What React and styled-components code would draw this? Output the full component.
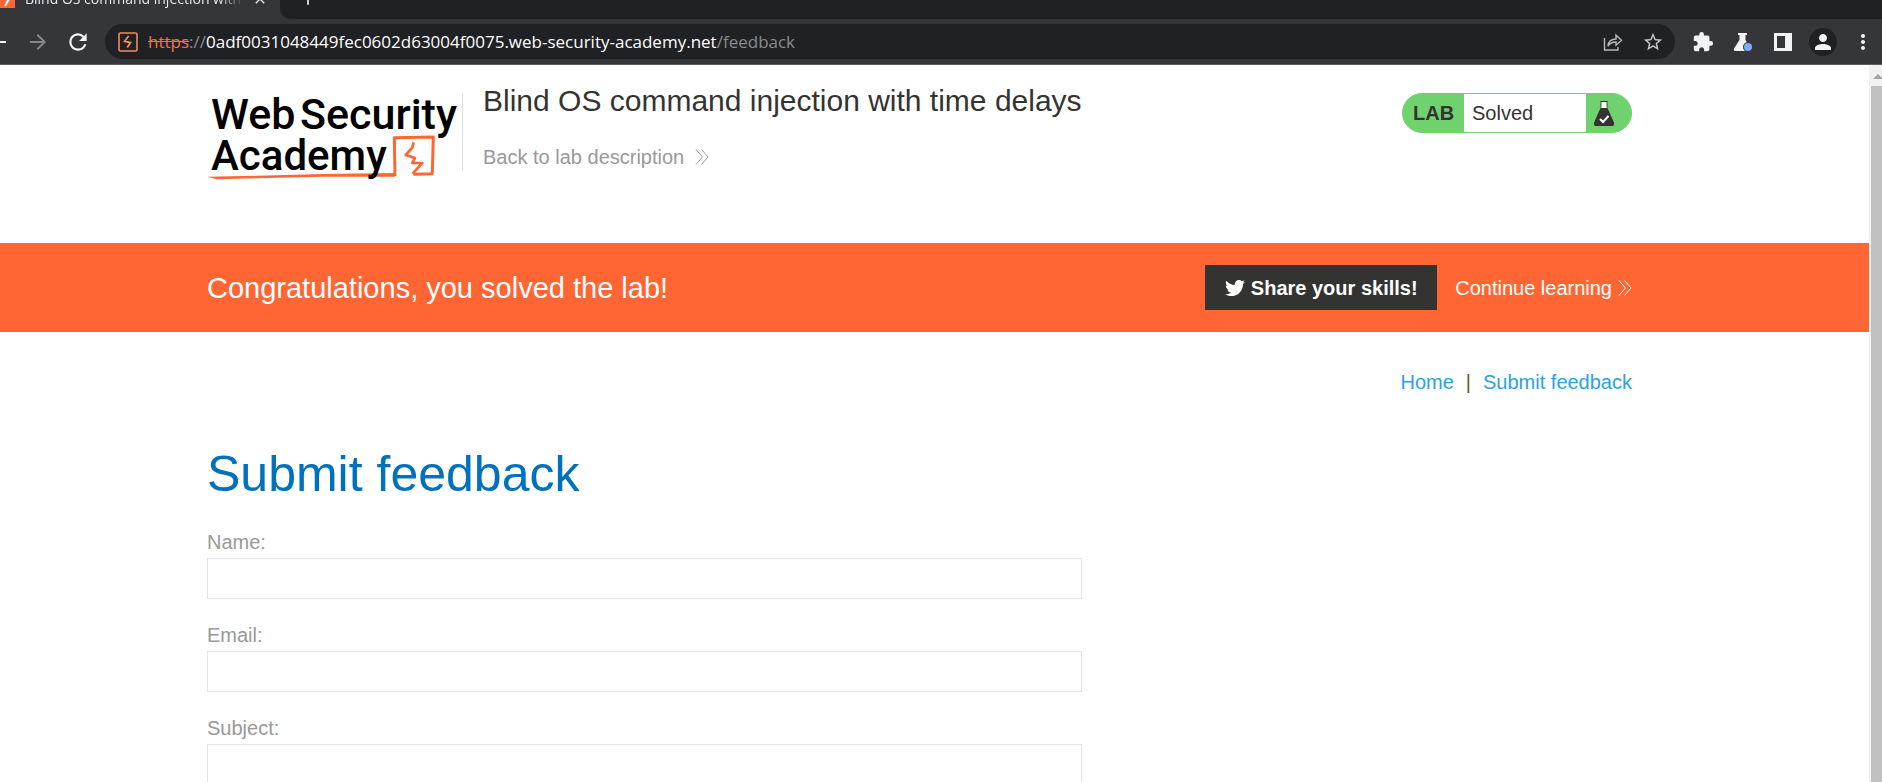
import React from 'react';
import styled, { createGlobalStyle } from 'styled-components';
import {
  MdArrowBack,
  MdArrowForward,
  MdRefresh,
  MdStarBorder,
  MdExtension,
  MdPerson,
  MdMoreVert,
  MdClose,
  MdAdd,
} from 'react-icons/md';
import { FaTwitter } from 'react-icons/fa';

const GlobalStyle = createGlobalStyle`
  * { box-sizing: border-box; }
  body {
    margin: 0;
    background: #fff;
    font-family: "Liberation Sans", Arial, sans-serif;
    font-size: 20px;
    color: #333332;
  }
  svg { display: block; flex: none; }
`;

const Window = styled.div`
  display: flex;
  flex-direction: column;
  height: 100vh;
  overflow: hidden;
`;

/* ---------- browser chrome ---------- */

const TabStrip = styled.div`
  flex: none;
  display: flex;
  align-items: flex-end;
  height: 19px;
  overflow: hidden;
  background: #35363a;
  font-family: "Open Sans", sans-serif;
`;

const Tab = styled.div`
  flex: none;
  display: flex;
  align-items: center;
  width: 280px;
  height: 40px;
  padding-right: 8px;
  color: #e8eaed;
`;

const TabTitle = styled.span`
  flex: 1;
  margin: 0 4px 0 10px;
  overflow: hidden;
  white-space: nowrap;
  font-size: 14px;
  line-height: 20px;
  mask-image: linear-gradient(to right, #000 88%, transparent);
`;

const StripRest = styled.div`
  flex: 1;
  display: flex;
  align-items: center;
  justify-content: space-between;
  height: 40px;
  padding: 0 10px 0 16px;
  border-bottom-left-radius: 10px;
  background: #202124;
`;

const WindowButtons = styled.div`
  display: flex;
  align-items: center;
  gap: 34px;
`;

const ChromeButton = styled.button`
  flex: none;
  display: flex;
  align-items: center;
  justify-content: center;
  width: 24px;
  height: 24px;
  padding: 0;
  border: 0;
  background: none;
  color: ${(p) => p.$tone || '#f1f3f4'};
`;

const ProfileButton = styled(ChromeButton)`
  width: 28px;
  height: 28px;
  margin: 0 -2px;
  border-radius: 50%;
  background: #202124;
`;

const Toolbar = styled.div`
  flex: none;
  display: flex;
  align-items: center;
  height: 46px;
  padding-right: 7px;
  border-bottom: 1px solid #5b5c60;
  background: #35363a;
`;

const NavButtons = styled.div`
  display: flex;
  align-items: center;
  gap: 16px;
  width: 105px;
  margin-left: -14px;
  margin-right: 14px;
`;

const AddressBar = styled.div`
  flex: 1;
  display: flex;
  align-items: center;
  height: 35px;
  padding: 0 10px 0 13px;
  border-radius: 18px;
  background: #202124;
`;

const Url = styled.div`
  flex: 1;
  margin-left: 10px;
  font-family: "Open Sans", sans-serif;
  font-size: 17px;
  line-height: 24px;
  white-space: nowrap;
  color: #fff;
`;

const Scheme = styled.span`
  color: #f0704a;
  text-decoration: line-through;
`;

const Faded = styled.span`
  color: #8a8c8f;
`;

const AddressActions = styled.div`
  display: flex;
  gap: 16px;
`;

const Extensions = styled.div`
  display: flex;
  align-items: center;
  gap: 16px;
  margin-left: 16px;
`;

/* ---------- page ---------- */

const Viewport = styled.div`
  flex: 1;
  display: flex;
  min-height: 0;
`;

const Page = styled.div`
  flex: 1;
  min-width: 0;
  overflow: hidden;
`;

const Container = styled.div`
  padding: 0 237px 0 207px;
`;

const Header = styled(Container).attrs({ as: 'header' })`
  display: flex;
  align-items: flex-start;
  height: 178px;
  padding-top: 28px;
`;

const Brand = styled.a`
  flex: none;
  width: 256px;
  height: 78px;
  border-right: 1px solid #e0e0e0;
`;

const Intro = styled.div`
  flex: 1;
  margin: -14px 0 0 20px;
`;

const LabTitle = styled.h2`
  margin: 0 0 22px;
  font-size: 30px;
  line-height: 44px;
  font-weight: 400;
`;

const PlainLink = styled.a`
  display: inline-flex;
  align-items: center;
  gap: ${(p) => p.$gap || 0}px;
  line-height: 24px;
  color: ${(p) => p.$color};
  text-decoration: none;
`;

const Badge = styled.div`
  display: flex;
  width: 230px;
  height: 40px;
  border: 1px solid #70d26e;
  border-radius: 20px;
  background: #70d26e;
  line-height: 38px;
`;

const BadgeLabel = styled.strong`
  width: 61px;
  padding-left: 10px;
`;

const BadgeStatus = styled.span`
  width: 122px;
  padding-left: 8px;
  background: #fff;
`;

const BadgeIcon = styled.span`
  padding: 7px 0 0 8px;
`;

const Banner = styled.section`
  background: #ff6633;
  color: #fff;
`;

const BannerRow = styled(Container)`
  display: flex;
  align-items: center;
  height: 89px;
`;

const BannerText = styled.h3`
  flex: 1;
  margin: 0;
  font-size: 29px;
  line-height: 40px;
  font-weight: 400;
`;

const ShareButton = styled.button`
  display: flex;
  align-items: center;
  justify-content: center;
  gap: 6px;
  width: 232px;
  height: 45px;
  margin-right: 18px;
  padding: 0;
  border: 0;
  background: #333332;
  color: #fff;
  font: bold 20px/24px "Liberation Sans", Arial, sans-serif;
`;

const TopLinks = styled.nav`
  display: flex;
  justify-content: flex-end;
  gap: 12px;
  padding: 38px 0 45px;
  line-height: 24px;
  color: #7a5230;
`;

const PageTitle = styled.h1`
  margin: 0 0 20px;
  font-size: 50px;
  line-height: 70px;
  font-weight: 400;
  color: #0071bc;
`;

const Form = styled.form`
  display: flex;
  flex-direction: column;
  gap: 23px;
  max-width: 875px;
`;

const Field = styled.label`
  display: flex;
  flex-direction: column;
  gap: 3px;
  line-height: 26px;
  color: #999;
`;

const TextInput = styled.input`
  width: 100%;
  height: 41px;
  padding: 0 12px;
  border: 1px solid #e4e4e4;
  background: #fff;
  font: 20px "Liberation Sans", Arial, sans-serif;
  color: #333332;
`;

const ScrollTrack = styled.div`
  flex: none;
  width: 13px;
  padding-left: 2px;
  background: #f1f1f1;
`;

const ScrollThumb = styled.div`
  height: 100%;
  background: #c1c1c1;
`;

/* ---------- drawings ---------- */

const Favicon = () => (
  <svg width="15" height="18" viewBox="0 0 15 18">
    <rect width="15" height="18" fill="#ff6633" />
    <path d="M8 2 4 9h5L5 16" fill="none" stroke="#fff" strokeWidth="2" />
  </svg>
);

const SiteIcon = () => (
  <svg width="20" height="20" viewBox="0 0 20 20" fill="none" stroke="#f58a5b">
    <rect x="1" y="1" width="18" height="18" rx="1.5" strokeWidth="1.6" />
    <path d="M10.6 4 6.6 9.3l6 1.3-3.4 5" strokeWidth="1.8" />
  </svg>
);

const ShareIcon = () => (
  <svg width="20" height="20" viewBox="0 0 20 20" fill="none" stroke="#b6b8bb" strokeWidth="1.4">
    <path d="M1.5 6v12h13.500v-3" />
    <path d="M5 14c.5-5 3.500-7 8-7V3.200l5.500 5-5.500 5V10c-3.500 0-6 1-8 4z" />
  </svg>
);

const LabsIcon = () => (
  <svg width="20" height="20" viewBox="0 0 20 20">
    <path d="M5 1h9v2h-1.500v5l5 8.500c.6 1.200 0 2.500-1.500 2.500H2.500C1 19 .4 17.700 1 16.500L6.500 8V3H5z" fill="#f1f3f4" />
    <circle cx="15" cy="15" r="5" fill="#35363a" />
    <circle cx="15" cy="15" r="4" fill="#7baaf7" />
  </svg>
);

const SidePanelIcon = () => (
  <svg width="18" height="18" viewBox="0 0 18 18">
    <path d="M0 0h18v18H0zM3 3v12h8V3z" fill="#f1f3f4" fillRule="evenodd" />
  </svg>
);

const Chevrons = ({ color }) => (
  <svg width="14" height="16" viewBox="0 0 14 16" fill="none" stroke={color} strokeWidth="1">
    <path d="M1 .5 7.500 8 1 15.500M6.500 .5 13 8l-6.500 7.500" />
  </svg>
);

const FlaskIcon = () => (
  <svg width="20" height="25" viewBox="0 0 20 25">
    <path d="M6.500.5h7M7 1v5.500M13 1v5.500" stroke="#333332" fill="none" />
    <path d="M7.500 1h5v6h-5z" fill="#fff" />
    <path d="M6.500 7h7L20 21.500c.6 1.700-.2 3.500-2 3.500H2c-1.800 0-2.600-1.800-2-3.500z" fill="#333332" />
    <path d="m6 18 3 3 5.500-6" fill="none" stroke="#fff" strokeWidth="2" />
  </svg>
);

const LogoText = styled.text`
  font-family: Roboto, sans-serif;
  font-size: ${(p) => p.$size}px;
  font-weight: 500;
  fill: #000;
`;

const Logo = () => (
  <svg width="251" height="88" viewBox="0 0 251 88" role="img" aria-label="Web Security Academy">
    <g transform="translate(-17 -23) scale(.3333)" stroke="#ff6633" fill="none" strokeLinejoin="round">
      <path d="M52 320 200 317 400 312 615 309v11L400 320 200 325 80 328z" fill="#ff6633" stroke="none" />
      <path d="M615 318 613 203 730 201 727 311 670 313" strokeWidth="9" />
      <path d="M671 217 667 233 647 255 675 264 667 279 697 279 668 311" strokeWidth="8" />
    </g>
    <LogoText $size={43} x="4" y="36">Web</LogoText>
    <LogoText $size={43} x="93" y="36">Security</LogoText>
    <LogoText $size={42} x="4" y="77">Academy</LogoText>
  </svg>
);

const FIELDS = [
  { name: 'name', label: 'Name:', type: 'text' },
  { name: 'email', label: 'Email:', type: 'email' },
  { name: 'subject', label: 'Subject:', type: 'text' },
];

export default function App() {
  return (
    <Window>
      <GlobalStyle />
      <TabStrip>
        <Tab>
          <Favicon />
          <TabTitle>Blind OS command injection with time delays</TabTitle>
          <ChromeButton aria-label="Close tab">
            <MdClose size={16} />
          </ChromeButton>
        </Tab>
        <StripRest>
          <ChromeButton aria-label="New tab">
            <MdAdd size={20} />
          </ChromeButton>
          <WindowButtons>
            <ChromeButton aria-label="Minimise">
              <svg width="11" height="4" viewBox="0 0 11 4"><path d="M0 2.500h11" stroke="#fff" /></svg>
            </ChromeButton>
            <ChromeButton aria-label="Close window">
              <svg width="12" height="6" viewBox="0 0 12 6"><path d="M3 0 0 4M9 0l3 4" stroke="#fff" /></svg>
            </ChromeButton>
          </WindowButtons>
        </StripRest>
      </TabStrip>

      <Toolbar>
        <NavButtons>
          <ChromeButton aria-label="Back"><MdArrowBack size={24} /></ChromeButton>
          <ChromeButton aria-label="Forward" $tone="#87888b"><MdArrowForward size={24} /></ChromeButton>
          <ChromeButton aria-label="Reload"><MdRefresh size={26} /></ChromeButton>
        </NavButtons>
        <AddressBar>
          <SiteIcon />
          <Url>
            <Scheme>https</Scheme>
            <Faded>://</Faded>
            0adf0031048449fec0602d63004f0075.web-security-academy.net
            <Faded>/feedback</Faded>
          </Url>
          <AddressActions>
            <ChromeButton aria-label="Share"><ShareIcon /></ChromeButton>
            <ChromeButton aria-label="Bookmark" $tone="#c4c6c9"><MdStarBorder size={22} /></ChromeButton>
          </AddressActions>
        </AddressBar>
        <Extensions>
          <ChromeButton aria-label="Extensions"><MdExtension size={22} /></ChromeButton>
          <ChromeButton aria-label="Labs"><LabsIcon /></ChromeButton>
          <ChromeButton aria-label="Side panel"><SidePanelIcon /></ChromeButton>
          <ProfileButton aria-label="Profile"><MdPerson size={24} /></ProfileButton>
          <ChromeButton aria-label="Menu"><MdMoreVert size={24} /></ChromeButton>
        </Extensions>
      </Toolbar>

      <Viewport>
        <Page>
          <Header>
            <Brand href="#academy"><Logo /></Brand>
            <Intro>
              <LabTitle>Blind OS command injection with time delays</LabTitle>
              <PlainLink href="#lab" $color="#999" $gap={11}>
                Back to lab description
                <Chevrons color="#999" />
              </PlainLink>
            </Intro>
            <Badge>
              <BadgeLabel>LAB</BadgeLabel>
              <BadgeStatus>Solved</BadgeStatus>
              <BadgeIcon><FlaskIcon /></BadgeIcon>
            </Badge>
          </Header>

          <Banner>
            <BannerRow>
              <BannerText>Congratulations, you solved the lab!</BannerText>
              <ShareButton type="button">
                <FaTwitter size={20} />
                Share your skills!
              </ShareButton>
              <PlainLink href="#learn" $color="#fff" $gap={6}>
                Continue learning
                <Chevrons color="#fff" />
              </PlainLink>
            </BannerRow>
          </Banner>

          <Container as="main">
            <TopLinks>
              <PlainLink href="#home" $color="#29a3e0">Home</PlainLink>
              <span>|</span>
              <PlainLink href="#feedback" $color="#29a3e0">Submit feedback</PlainLink>
            </TopLinks>
            <PageTitle>Submit feedback</PageTitle>
            <Form>
              {FIELDS.map((f) => (
                <Field key={f.name}>
                  {f.label}
                  <TextInput type={f.type} name={f.name} />
                </Field>
              ))}
            </Form>
          </Container>
        </Page>
        <ScrollTrack>
          <svg width="11" height="21" viewBox="0 0 11 21">
            <path d="M2 14 7 9l5 5z" fill="#a3a3a3" />
          </svg>
          <ScrollThumb />
        </ScrollTrack>
      </Viewport>
    </Window>
  );
}
